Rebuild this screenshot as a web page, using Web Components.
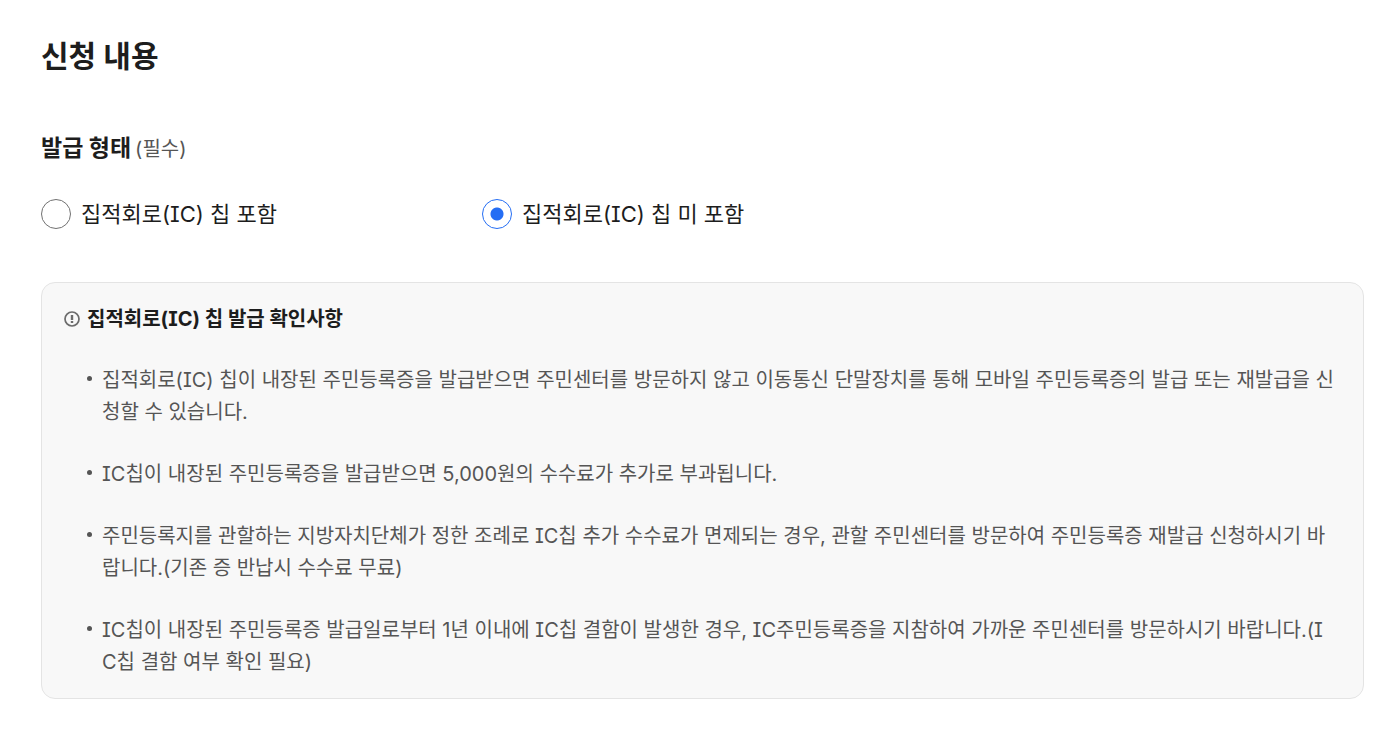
<!DOCTYPE html>
<html lang="ko">
<head>
<meta charset="utf-8">
<meta name="viewport" content="width=device-width, initial-scale=1">
<title>신청 내용</title>
<style>
body{margin:0;background:#fff;color:#1d1d1d;font-family:Inter,"Noto Sans CJK KR",sans-serif;font-feature-settings:"cv08"}
</style>
</head>
<body>
<application-form heading="신청 내용">
  <radio-group legend="발급 형태" note="(필수)">
    <radio-option group="chip" value="with">집적회로(IC) 칩 포함</radio-option>
    <radio-option group="chip" value="without" checked>집적회로(IC) 칩 미 포함</radio-option>
  </radio-group>
  <notice-box heading="집적회로(IC) 칩 발급 확인사항">
    <notice-item>집적회로(IC) 칩이 내장된 주민등록증을 발급받으면 주민센터를 방문하지 않고 이동통신 단말장치를 통해 모바일 주민등록증의 발급 또는 재발급을 신청할 수 있습니다.</notice-item>
    <notice-item>IC칩이 내장된 주민등록증을 발급받으면 5,000원의 수수료가 추가로 부과됩니다.</notice-item>
    <notice-item>주민등록지를 관할하는 지방자치단체가 정한 조례로 IC칩 추가 수수료가 면제되는 경우, 관할 주민센터를 방문하여 주민등록증 재발급 신청하시기 바랍니다.(기존 증 반납시 수수료 무료)</notice-item>
    <notice-item>IC칩이 내장된 주민등록증 발급일로부터 1년 이내에 IC칩 결함이 발생한 경우, IC주민등록증을 지참하여 가까운 주민센터를 방문하시기 바랍니다.(IC칩 결함 여부 확인 필요)</notice-item>
  </notice-box>
</application-form>
<script>
class Base extends HTMLElement{
  connectedCallback(){
    if(!this.shadowRoot)this.attachShadow({mode:"open"}).innerHTML=this.render();
  }
}
customElements.define("application-form",class extends Base{
  render(){return `<style>
    :host{display:block;padding:32px 31px 34px 41px}
    h1{margin:0 0 52px;font-size:30px;line-height:48px;font-weight:700}
  </style><main><h1>${this.getAttribute("heading")}</h1><slot></slot></main>`}
});
customElements.define("radio-group",class extends Base{
  render(){return `<style>
    :host{display:block;margin-bottom:53px}
    fieldset{border:0;margin:0;padding:0;min-width:0}
    legend{display:flex;align-items:baseline;gap:4px;padding:0;margin-bottom:35px;font-size:23px;line-height:32px;font-weight:700}
    small{font-size:20px;line-height:24px;font-weight:400;color:#555}
    .options{display:grid;grid-template-columns:repeat(3,1fr)}
  </style><fieldset><legend>${this.getAttribute("legend")}<small>${this.getAttribute("note")}</small></legend>
  <div class="options"><slot></slot></div></fieldset>`}
});
customElements.define("radio-option",class extends Base{
  connectedCallback(){
    super.connectedCallback();
    this.input=this.shadowRoot.querySelector("input");
    this.input.addEventListener("change",()=>{
      for(const o of this.parentElement.querySelectorAll("radio-option"))
        if(o!==this)o.input.checked=false;
    });
  }
  render(){return `<style>
    :host{display:block}
    label{display:flex;align-items:center;gap:10px;font-size:22px;line-height:30px;cursor:pointer}
    input{appearance:none;flex:none;box-sizing:border-box;width:30px;height:30px;margin:0;border:1px solid #717171;border-radius:50%;background:#fff}
    input:checked{border-color:#256ef4;background:radial-gradient(circle,#256ef4 6px,#fff 7px)}
  </style><label><input type="radio" name="${this.getAttribute("group")}" value="${this.getAttribute("value")}"${this.hasAttribute("checked")?" checked":""}><span><slot></slot></span></label>`}
});
customElements.define("notice-box",class extends Base{
  render(){return `<style>
    :host{display:block;padding:20px 26px 20px 22px;border:1px solid #e4e4e4;border-radius:14px;background:#f8f8f8}
    h2{display:flex;align-items:center;gap:7px;margin:0 0 29px;font-size:20px;line-height:32px;font-weight:700}
    svg{flex:none;width:16px;height:16px}
    .list{display:grid;gap:30px}
  </style><h2><svg viewBox="0 0 16 16" fill="none" stroke="#6b6b6b" stroke-width="1.7" aria-hidden="true"><circle cx="8" cy="8" r="7"/><path d="M8 4v5M8 10v2" stroke-width="2.4"/></svg><span>${this.getAttribute("heading")}</span></h2>
  <div class="list" role="list"><slot></slot></div>`}
});
customElements.define("notice-item",class extends Base{
  connectedCallback(){this.setAttribute("role","listitem");super.connectedCallback()}
  render(){return `<style>
    :host{display:flex;gap:10px;padding-left:23px;font-size:20px;line-height:32px;color:#555;word-break:break-all}
    i{flex:none;width:5px;height:5px;margin-top:12px;border-radius:50%;background:#555}
  </style><i></i><span><slot></slot></span>`}
});
</script>
</body>
</html>
